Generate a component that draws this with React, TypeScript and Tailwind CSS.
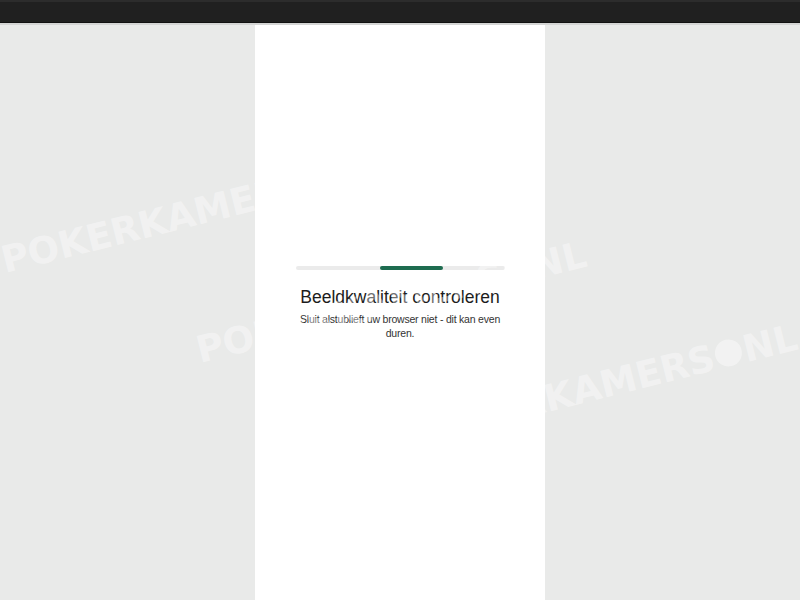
import React from 'react';

// diagonal watermark copies, left/top = baseline start minus ascent
const marks = [
  { id: 1, cls: 'left-[5px] top-[242px]' },
  { id: 2, cls: 'left-[200px] top-[332px]' },
  { id: 3, cls: 'left-[411px] top-[415px]' },
];

function Watermark({ cls }: { cls: string }) {
  return (
    <div
      className={`absolute ${cls} origin-[0_31px] rotate-[-14deg] whitespace-nowrap text-[37px] font-bold leading-none text-white/40 pointer-events-none select-none`}
      style={{ fontFamily: '"DejaVu Sans", sans-serif' }}
    >
      POKERKAMERS
      <span className="inline-block w-[0.74em] h-[0.74em] mx-[0.04em] rounded-full bg-white/40" />
      NL
    </div>
  );
}

export default function App() {
  return (
    <div
      className="relative min-h-screen flex flex-col bg-[#e9eae9] overflow-hidden"
      style={{ fontFamily: '"Liberation Sans", Arial, sans-serif' }}
    >
      {/* browser-ish top strip */}
      <div className="h-[23px] bg-[#202020] border-t-2 border-[#2c2c2c] border-b border-b-[#111111]" />
      <div className="h-[2px] bg-[#d4d5d4]" />

      <div className="flex flex-1">
        <div className="flex-1" />
        <div className="w-[290px] bg-white flex flex-col items-center">
          <div className="mt-[241px] w-[209px] h-[4px] rounded-full bg-[#ebebeb]">
            <div className="ml-[84px] w-[63px] h-[4px] rounded-full bg-[#1e6c50]" />
          </div>
          <h1 className="mt-[17px] text-[17.5px] leading-[20px] text-[#1c1c1c] font-normal">
            Beeldkwaliteit controleren
          </h1>
          <p className="mt-[5px] w-[214px] text-center text-[10.5px] leading-[14px] tracking-[-0.02em] text-[#333333]">
            Sluit alstublieft uw browser niet - dit kan even duren.
          </p>
        </div>
        <div className="flex-1" />
      </div>

      {marks.map((m) => (
        <Watermark key={m.id} cls={m.cls} />
      ))}
    </div>
  );
}
